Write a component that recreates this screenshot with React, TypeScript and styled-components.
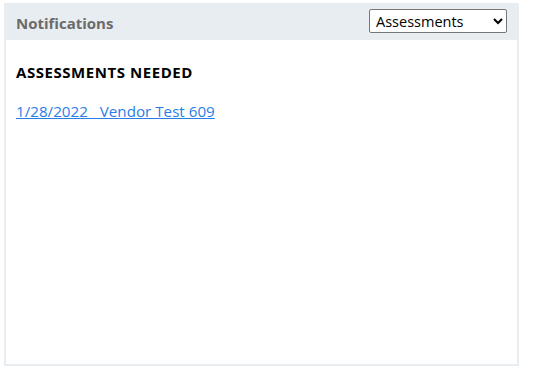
import React from 'react';
import styled, { createGlobalStyle } from 'styled-components';

const GlobalStyle = createGlobalStyle`
  body {
    margin: 0;
    background: #ffffff;
    font-family: "Open Sans", "Noto Sans", sans-serif;
  }
`;

const Panel = styled.section`
  margin: 3px 0 0 4px;
  width: 515px;
  height: 363px;
  box-sizing: border-box;
  border: 2px solid #e8edf1;
  border-top: none;
  background: #ffffff;
  display: flex;
  flex-direction: column;
`;

const Header = styled.header`
  height: 37px;
  margin: 0 -2px;
  padding: 0 12px 0 12px;
  background: #e8edf1;
  display: flex;
  align-items: center;
  justify-content: space-between;
`;

const Title = styled.h2`
  margin: 2px 0 0;
  font-size: 15px;
  font-weight: 700;
  color: #6b6b6b;
`;

const Select = styled.select`
  width: 138px;
  height: 24px;
  margin-top: -1px;
  font-family: "Open Sans", "Noto Sans", sans-serif;
  font-size: 14.5px;
  color: #000;
  background: #fff;
  border: 1px solid #767676;
  border-radius: 2px;
  padding: 0 2px;
`;

const Body = styled.div`
  padding: 22px 10px;
`;

const SectionTitle = styled.h3`
  margin: 0 0 18px;
  font-size: 15px;
  font-weight: 700;
  color: #000;
  letter-spacing: 0.55px;
`;

const ItemLink = styled.a`
  font-size: 15.2px;
  color: #2b7de6;
  text-decoration: underline;
  white-space: pre;
`;

export default function App() {
  return (
    <>
      <GlobalStyle />
      <Panel>
        <Header>
          <Title>Notifications</Title>
          <Select defaultValue="Assessments">
            <option>Assessments</option>
          </Select>
        </Header>
        <Body>
          <SectionTitle>ASSESSMENTS NEEDED</SectionTitle>
          <ItemLink href="#">{'1/28/2022   Vendor Test 609'}</ItemLink>
        </Body>
      </Panel>
    </>
  );
}
